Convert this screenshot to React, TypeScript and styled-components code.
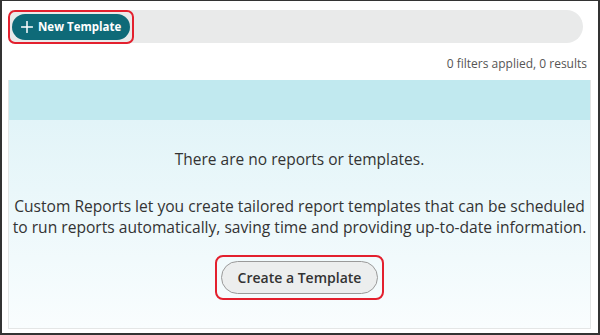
import styled, { createGlobalStyle } from "styled-components";

const Global = createGlobalStyle`
  html, body { margin: 0; padding: 0; background: #fff; }
  body { font-family: "Open Sans", "Liberation Sans", sans-serif; color: #333; }
`;

const Frame = styled.div`
  box-sizing: border-box;
  width: 600px;
  height: 335px;
  border: 2px solid #333;
  border-top-width: 1px;
  padding: 9px 7px 0 6px;
  background: #fff;
`;

const Toolbar = styled.div`
  height: 33px;
  margin: 0 8px 0 2px;
  background: #e9eaea;
  border-radius: 0 17px 17px 0;
  display: flex;
  align-items: center;
`;

const Highlight = styled.div<{ $radius?: number; $pad?: number }>`
  display: inline-flex;
  border: 2px solid #e3202e;
  border-radius: ${({ $radius }) => $radius ?? 7}px;
  padding: ${({ $pad }) => $pad ?? 2}px;
`;

const PrimaryButton = styled.button`
  display: inline-flex;
  align-items: center;
  gap: 5px;
  height: 26px;
  padding: 0 9px 0 9px;
  border: 0;
  border-radius: 13px;
  background: #0e6a78;
  color: #fff;
  font-family: inherit;
  font-size: 11.5px;
  font-weight: 700;
  cursor: pointer;
`;

const Meta = styled.div`
  height: 37px;
  display: flex;
  align-items: center;
  justify-content: flex-end;
  padding: 4px 4px 0 0;
  box-sizing: border-box;
  font-size: 12px;
  color: #555;
`;

const Panel = styled.section`
  border: 1px solid #e4e6e6;
  border-top: 0;
  height: 248px;
  display: flex;
  flex-direction: column;
`;

const PanelHeader = styled.div`
  height: 40px;
  background: #c1e9ef;
`;

const PanelBody = styled.div`
  flex: 1;
  background: linear-gradient(#e2f4f8, #f9fdfe);
  display: flex;
  flex-direction: column;
  align-items: center;
  text-align: center;
  padding-top: 29px;
`;

const Lead = styled.p`
  margin: 0;
  font-size: 15.5px;
  line-height: 21px;
  color: #333;
`;

const Description = styled.p`
  margin: 26px 0 0;
  font-size: 15.6px;
  line-height: 21px;
  color: #333;
  white-space: nowrap;
`;

const ButtonSlot = styled.div`
  margin-top: 17px;
`;

const SecondaryButton = styled.button`
  height: 33px;
  padding: 0 16px;
  border: 1px solid #9a9a9a;
  border-radius: 17px;
  background: #eceeee;
  color: #333;
  font-family: inherit;
  font-size: 14px;
  font-weight: 600;
  cursor: pointer;
`;

function PlusIcon() {
  return (
    <svg width="12" height="12" viewBox="0 0 12 12">
      <path d="M6 0.5v11M0.5 6h11" stroke="#fff" strokeWidth="1.5" strokeLinecap="round" />
    </svg>
  );
}

export default function App() {
  return (
    <>
      <Global />
      <Frame>
        <Toolbar>
          <Highlight style={{ margin: "-1px 0 -1px -2px" }}>
            <PrimaryButton>
              <PlusIcon />
              New Template
            </PrimaryButton>
          </Highlight>
        </Toolbar>
        <Meta>0 filters applied, 0 results</Meta>
        <Panel>
          <PanelHeader />
          <PanelBody>
            <Lead>There are no reports or templates.</Lead>
            <Description>
              Custom Reports let you create tailored report templates that can be scheduled
              <br />
              to run reports automatically, saving time and providing up-to-date information.
            </Description>
            <ButtonSlot>
              <Highlight $radius={8} $pad={4}>
                <SecondaryButton>Create a Template</SecondaryButton>
              </Highlight>
            </ButtonSlot>
          </PanelBody>
        </Panel>
      </Frame>
    </>
  );
}
